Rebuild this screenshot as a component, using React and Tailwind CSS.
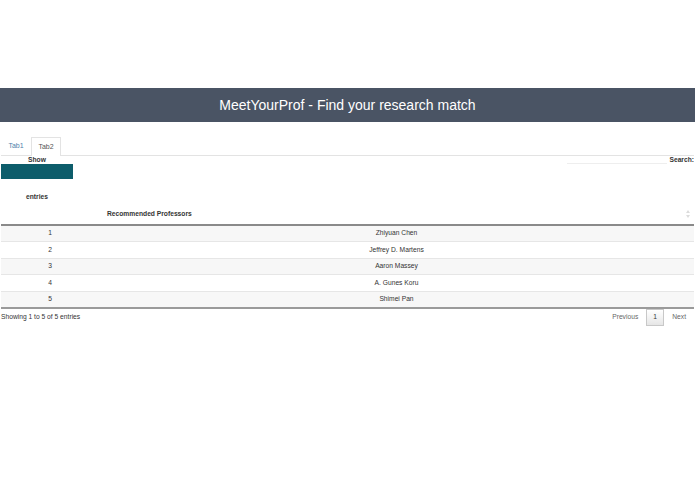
const professors = [
 "Zhiyuan Chen",
 "Jeffrey D. Martens",
 "Aaron Massey",
 "A. Gunes Koru",
 "Shimei Pan",
]

const SortIcon = () => (
 <svg width="4" height="8" viewBox="0 0 4 8" className="inline-block">
  <path d="M2 0 L4 3 L0 3 Z" fill="#dcdcdc" />
  <path d="M0 5 L4 5 L2 8 Z" fill="#dcdcdc" />
 </svg>
)

const App = () => {
 return (
  <div className="min-h-[494px] bg-white pt-[88px] font-['Liberation_Sans',Arial,sans-serif] text-[#333]">
   <div className="h-[34px] bg-[#4a5464] flex items-center justify-center">
    <h1 className="text-white text-[14px] leading-none">MeetYourProf - Find your research match</h1>
   </div>

   <div className="px-[1px] mt-[15px]">
    <div className="flex h-[19px] border-b border-[#e3e3e3] text-[7px]">
     <div className="w-[30px] flex items-center justify-center text-[#4f7fab]">Tab1</div>
     <div className="w-[30px] h-[19px] flex items-center justify-center border border-b-0 border-[#e3e3e3] bg-white text-[#555] -mb-[1px]">
      Tab2
     </div>
    </div>

    <div className="flex justify-between">
     <div className="w-[72px] flex flex-col items-center text-[6.7px] font-bold">
      <span className="h-[8px] leading-[8px]">Show</span>
      <div className="w-full h-[15px] bg-[#0d5d6b]" />
      <span className="mt-[14px] h-[8px] leading-[8px]">entries</span>
     </div>
     <div className="flex items-start text-[6.7px] font-bold">
      <div className="w-[100px] h-[8px] border-b border-[#eeeeee] mr-[2px]" />
      <span className="h-[8px] leading-[8px]">Search:</span>
     </div>
    </div>

    <table className="w-full mt-[4px] border-collapse text-[6.7px]">
     <thead>
      <tr className="h-[20px] border-b-2 border-[#8a8a8a]">
       <th className="w-[98px]" />
       <th className="text-left font-bold pl-[8px]">
        <div className="flex items-center justify-between pr-[4px]">
         <span>Recommended Professors</span>
         <SortIcon />
        </div>
       </th>
      </tr>
     </thead>
     <tbody>
      {professors.map((name, i) => (
       <tr key={name} className={`h-[16.5px] border-t border-[#e6e6e6] ${i % 2 === 0 ? "bg-[#f7f7f7]" : "bg-white"}`}>
        <td className="text-center">{i + 1}</td>
        <td className="text-center">{name}</td>
       </tr>
      ))}
     </tbody>
     <tfoot>
      <tr className="border-t-2 border-[#9a9a9a]" />
     </tfoot>
    </table>

    <div className="flex items-center justify-between h-[18px] mt-[1px] text-[6.7px]">
     <span>Showing 1 to 5 of 5 entries</span>
     <div className="flex items-center text-[#666]">
      <span className="mr-[8px]">Previous</span>
      <span className="w-[18px] h-[17px] flex items-center justify-center border border-[#c8c8c8] bg-gradient-to-b from-white to-[#e6e6e6] text-[#333]">1</span>
      <span className="ml-[8px] mr-[8px]">Next</span>
     </div>
    </div>
   </div>
  </div>
 )
}

export default App
